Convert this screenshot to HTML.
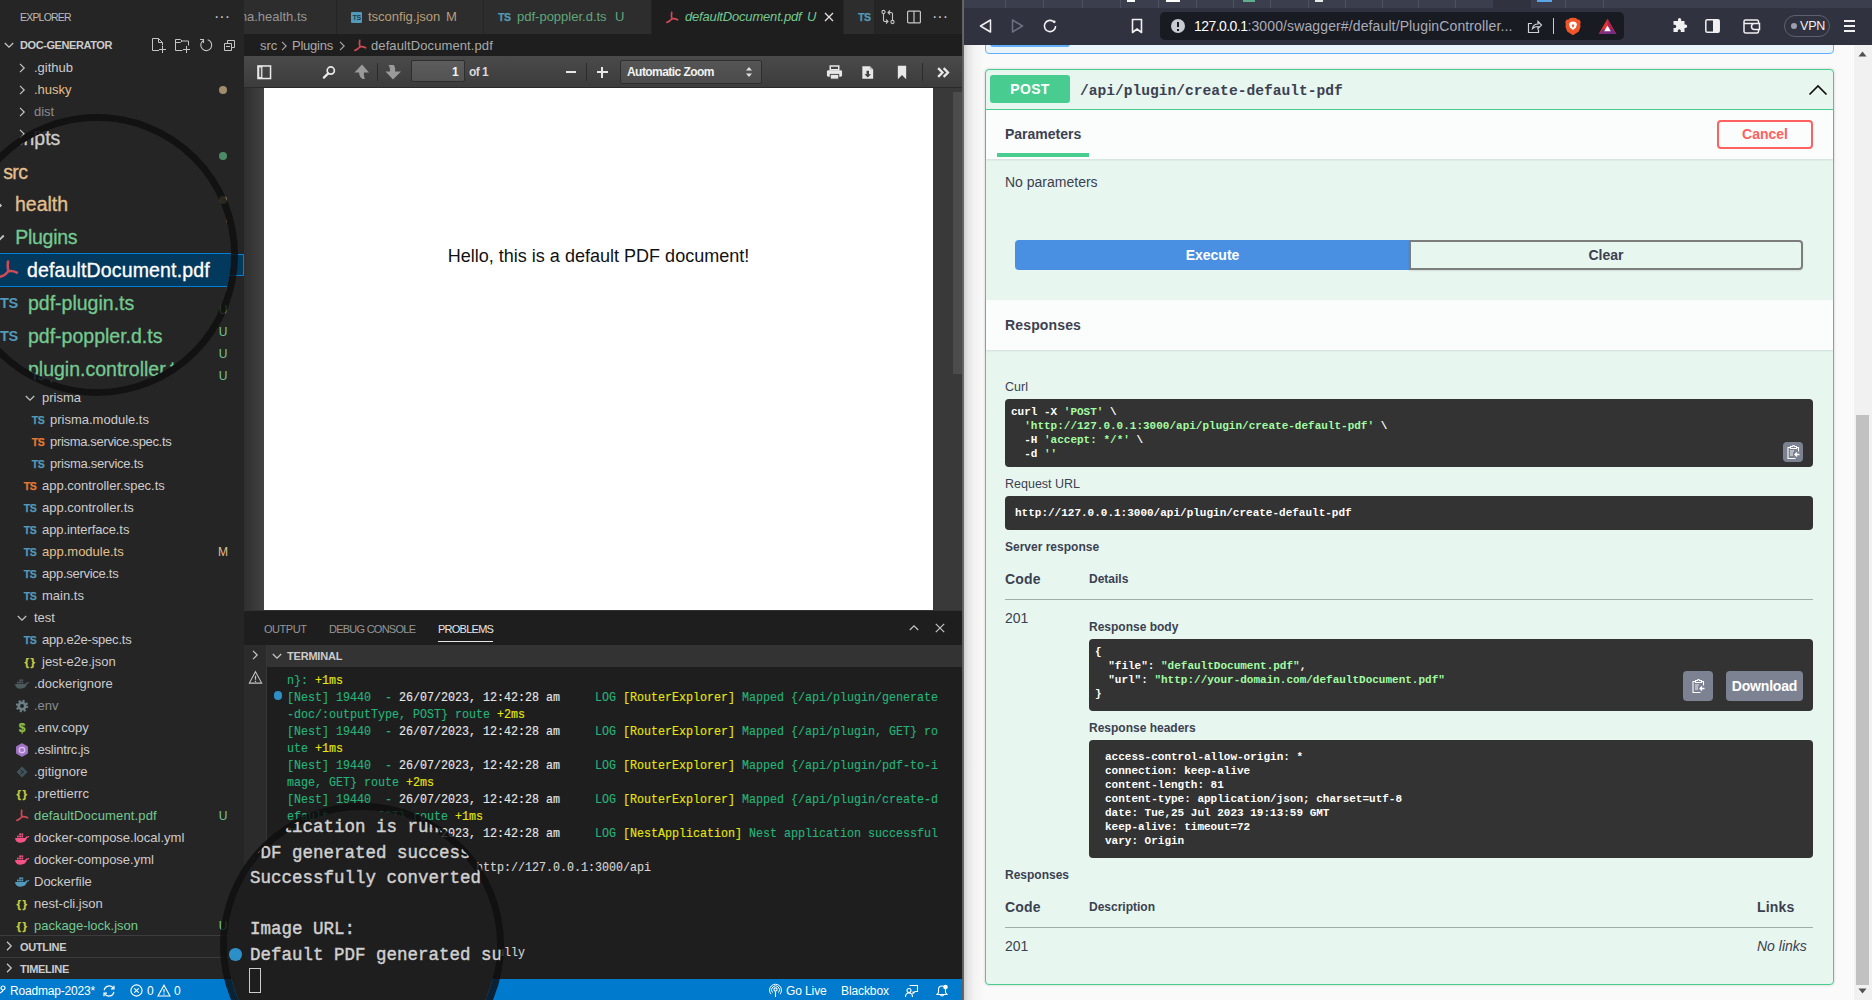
<!DOCTYPE html>
<html lang="en"><head><meta charset="utf-8"><title>doc-generator</title>
<style>
*{box-sizing:border-box}
html,body{margin:0;padding:0}
body{width:1872px;height:1000px;overflow:hidden;position:relative;background:#1e1e1e;font-family:"Liberation Sans",sans-serif;font-size:13px;color:#ccc}
.a{position:absolute}
.t{position:absolute;white-space:pre;line-height:1}
svg{position:absolute;overflow:visible}
/* sidebar */
#sb{left:0;top:0;width:244px;height:980px;background:#252526;overflow:hidden}
.row{position:absolute;left:0;width:244px;height:22px;line-height:22px;font-size:13px;white-space:pre}
.row .lbl{position:absolute;top:0}
.row .st{position:absolute;right:15px;top:0;font-size:12px;text-align:center;width:12px}
.row .ic{position:absolute;top:0;width:16px;text-align:center;font-weight:bold;font-size:10.5px;letter-spacing:-.4px;-webkit-text-stroke:.25px currentColor}
.row .chev{position:absolute;top:6px;width:10px;height:10px}
.cM{color:#e2c08d}.cU{color:#73c991}.cI{color:#8c8c8c}
.dot{position:absolute;width:8px;height:8px;border-radius:50%;right:17px;top:7px}
/* editor */
#tabs{left:244px;top:0;width:718px;height:34px;background:#252526;overflow:hidden}
.tab{position:absolute;top:0;height:34px;background:#2d2d2d;line-height:34.5px;font-size:13px;white-space:pre}
#bc{left:244px;top:34px;width:718px;height:22px;background:#1e1e1e;line-height:23.5px;font-size:13px;color:#a9a9a9}
#pdfbar{left:244px;top:56px;width:718px;height:32px;background:linear-gradient(#4a4a4a,#3c3c3c);border-bottom:1px solid #2a2a2a}
#pdfview{left:244px;top:88px;width:718px;height:522px;background:#404040;overflow:hidden}
/* panel */
#panel{left:244px;top:610px;width:718px;height:370px;background:#1e1e1e;overflow:hidden}
.tl{position:absolute;left:43px;margin-top:1px;white-space:pre;font-family:"Liberation Mono",monospace;font-size:12.8px;transform:scaleX(.9115);transform-origin:0 0;line-height:17px;height:17px;color:#d4d4d4;-webkit-text-stroke:.15px currentColor}
.g{color:#26b37a}.y{color:#e5e510}.w{color:#e5e5e5}
/* status */
#status{left:0;top:979px;width:962px;height:21px;background:#007acc;color:#fff;font-size:12px;line-height:21px;white-space:pre}
/* browser */
#br{left:962px;top:0;width:910px;height:1000px;background:#fafafa;overflow:hidden}
.sw{color:#3b4151}
.mono{font-family:"Liberation Mono",monospace;font-weight:bold;font-size:11px;line-height:14px;white-space:pre;color:#fff}
.mono i{font-style:normal;color:#a2fca2}
.box{position:absolute;background:#333;border-radius:4px}
.h5{position:absolute;font-size:12px;font-weight:bold;color:#3b4151;white-space:pre;line-height:14px}
.b14{position:absolute;font-size:14px;font-weight:bold;color:#3b4151;white-space:pre;line-height:16px}
.n14{position:absolute;font-size:14px;color:#3b4151;white-space:pre;line-height:16px}
/* magnifier */
.mag{position:absolute;border-radius:50%;border:7px solid rgba(14,14,14,.8)}
.magc{position:absolute;left:0;top:0;right:0;bottom:0;border-radius:50%;overflow:hidden}
</style></head>
<body>
<div id="sb" class="a"><div class="t" style="left:20px;top:12px;font-size:10.5px;color:#bbb;letter-spacing:-.8px">EXPLORER</div>
<div class="t" style="left:214px;top:9px;font-size:16px;color:#c5c5c5;letter-spacing:0">···</div>
<svg style="left:4px;top:40px" width="10.0" height="10.0" viewBox="0 0 10 10"><path d="M0.8 3 L5 7.2 L9.2 3" fill="none" stroke="#c5c5c5" stroke-width="1.3"/></svg>
<div class="t" style="left:20px;top:40px;font-size:11px;font-weight:bold;color:#ccc;letter-spacing:-.42px">DOC-GENERATOR</div>
<svg style="left:150px;top:37px" width="16" height="16" viewBox="0 0 16 16" fill="none" stroke="#c5c5c5" stroke-width="1"><path d="M9 13.5H2.5V1.5H8.5L12.5 5.5V8.500000M8.5 1.5V5.5H12.5"/><path d="M12.5 9V16M9 12.5H16" shape-rendering="crispEdges"/></svg>
<svg style="left:174px;top:37px" width="16" height="16" viewBox="0 0 16 16" fill="none" stroke="#c5c5c5" stroke-width="1"><path d="M8.5 13.5H1.5V2.5H6.5L8 4H14.5V8.500000M1.5 5.5H6.5L8 4"/><path d="M12.5 9V16M9 12.5H16" shape-rendering="crispEdges"/></svg>
<svg style="left:198px;top:37px" width="16" height="16" viewBox="0 0 16 16" fill="none" stroke="#c5c5c5" stroke-width="1.1"><path d="M2 2.5H5.5V6M5.100000 3.600000A5.500000 5.500000 0 1 0 9.700000 2.800000"/></svg>
<svg style="left:222px;top:37px" width="16" height="16" viewBox="0 0 16 16" fill="none" stroke="#c5c5c5" stroke-width="1"><path d="M2.5 6.5h7v7h-7zM5.5 6.500000V3.500000h7v7H9.500000" /><path d="M4 9.5H8" shape-rendering="crispEdges"/></svg>
<div class="row" style="top:56.5px"><svg style="left:17px;top:6px" width="10.0" height="10.0" viewBox="0 0 10 10"><path d="M3 0.8 L7.2 5 L3 9.2" fill="none" stroke="#c5c5c5" stroke-width="1.2"/></svg><span class="lbl " style="left:34px">.github</span></div>
<div class="row" style="top:78.5px"><svg style="left:17px;top:6px" width="10.0" height="10.0" viewBox="0 0 10 10"><path d="M3 0.8 L7.2 5 L3 9.2" fill="none" stroke="#c5c5c5" stroke-width="1.2"/></svg><span class="lbl cM" style="left:34px">.husky</span><span class="dot" style="background:#a08d6b"></span></div>
<div class="row" style="top:100.5px"><svg style="left:17px;top:6px" width="10.0" height="10.0" viewBox="0 0 10 10"><path d="M3 0.8 L7.2 5 L3 9.2" fill="none" stroke="#c5c5c5" stroke-width="1.2"/></svg><span class="lbl cI" style="left:34px">dist</span></div>
<div class="row" style="top:122.5px"><svg style="left:17px;top:6px" width="10.0" height="10.0" viewBox="0 0 10 10"><path d="M3 0.8 L7.2 5 L3 9.2" fill="none" stroke="#c5c5c5" stroke-width="1.2"/></svg><span class="lbl cI" style="left:34px">node_modules</span></div>
<div class="row" style="top:144.5px"><svg style="left:17px;top:6px" width="10.0" height="10.0" viewBox="0 0 10 10"><path d="M3 0.8 L7.2 5 L3 9.2" fill="none" stroke="#c5c5c5" stroke-width="1.2"/></svg><span class="lbl cU" style="left:34px">prisma</span><span class="dot" style="background:#4f8a66"></span></div>
<div class="row" style="top:166.5px"><svg style="left:17px;top:6px" width="10.0" height="10.0" viewBox="0 0 10 10"><path d="M3 0.8 L7.2 5 L3 9.2" fill="none" stroke="#c5c5c5" stroke-width="1.2"/></svg><span class="lbl " style="left:34px">scripts</span></div>
<div class="row" style="top:188.5px"><svg style="left:17px;top:6px" width="10.0" height="10.0" viewBox="0 0 10 10"><path d="M0.8 3 L5 7.2 L9.2 3" fill="none" stroke="#c5c5c5" stroke-width="1.2"/></svg><span class="lbl cM" style="left:34px">src</span><span class="dot" style="background:#a08d6b"></span></div>
<div class="row" style="top:210.5px"><svg style="left:25px;top:6px" width="10.0" height="10.0" viewBox="0 0 10 10"><path d="M3 0.8 L7.2 5 L3 9.2" fill="none" stroke="#c5c5c5" stroke-width="1.2"/></svg><span class="lbl cM" style="left:42px">health</span><span class="dot" style="background:#a08d6b"></span></div>
<div class="row" style="top:232.5px"><svg style="left:25px;top:6px" width="10.0" height="10.0" viewBox="0 0 10 10"><path d="M0.8 3 L5 7.2 L9.2 3" fill="none" stroke="#c5c5c5" stroke-width="1.2"/></svg><span class="lbl cU" style="left:42px">Plugins</span><span class="dot" style="background:#4f8a66"></span></div>
<div class="a" style="left:0;top:254px;width:244px;height:22px;background:#04395e;border:1px solid #007fd4"></div>
<div class="row" style="top:254.5px"><svg style="left:31px;top:3px" width="16.0" height="16.0" viewBox="0 0 16 16"><path d="M6.7 2.3C6.3 4.8 6.5 7 6.9 8.8C5.6 10.4 3.6 12 1.9 12.4M6.9 8.8C9 8.5 11 8.9 12.6 9.8" fill="none" stroke="#d04a55" stroke-width="1.7" stroke-linecap="round" stroke-linejoin="round"/></svg><span class="lbl" style="color:#fff;left:50px;letter-spacing:0.15px">defaultDocument.pdf</span><span class="st cU">U</span></div>
<div class="row" style="top:276.5px"><span class="ic" style="left:30px;color:#519aba">TS</span><span class="lbl cU" style="left:50px">pdf-plugin.ts</span><span class="st cU">U</span></div>
<div class="row" style="top:298.5px"><span class="ic" style="left:30px;color:#519aba">TS</span><span class="lbl cU" style="left:50px">pdf-poppler.d.ts</span><span class="st cU">U</span></div>
<div class="row" style="top:320.5px"><span class="ic" style="left:30px;color:#519aba">TS</span><span class="lbl cU" style="left:50px">plugin.controller.ts</span><span class="st cU">U</span></div>
<div class="row" style="top:342.5px"><span class="ic" style="left:30px;color:#519aba">TS</span><span class="lbl cU" style="left:50px">plugin.module.ts</span><span class="st cU">U</span></div>
<div class="row" style="top:364.5px"><span class="ic" style="left:30px;color:#519aba">TS</span><span class="lbl cU" style="left:50px">plugin.service.ts</span><span class="st cU">U</span></div>
<div class="row" style="top:386.5px"><svg style="left:25px;top:6px" width="10.0" height="10.0" viewBox="0 0 10 10"><path d="M0.8 3 L5 7.2 L9.2 3" fill="none" stroke="#c5c5c5" stroke-width="1.2"/></svg><span class="lbl " style="left:42px">prisma</span></div>
<div class="row" style="top:408.5px"><span class="ic" style="left:30px;color:#519aba">TS</span><span class="lbl " style="left:50px">prisma.module.ts</span></div>
<div class="row" style="top:430.5px"><span class="ic" style="left:30px;color:#e37933">TS</span><span class="lbl " style="left:50px;letter-spacing:-0.33px">prisma.service.spec.ts</span></div>
<div class="row" style="top:452.5px"><span class="ic" style="left:30px;color:#519aba">TS</span><span class="lbl " style="left:50px;letter-spacing:-0.25px">prisma.service.ts</span></div>
<div class="row" style="top:474.5px"><span class="ic" style="left:22px;color:#e37933">TS</span><span class="lbl " style="left:42px">app.controller.spec.ts</span></div>
<div class="row" style="top:496.5px"><span class="ic" style="left:22px;color:#519aba">TS</span><span class="lbl " style="left:42px">app.controller.ts</span></div>
<div class="row" style="top:518.5px"><span class="ic" style="left:22px;color:#519aba">TS</span><span class="lbl " style="left:42px;letter-spacing:-0.1px">app.interface.ts</span></div>
<div class="row" style="top:540.5px"><span class="ic" style="left:22px;color:#519aba">TS</span><span class="lbl cM" style="left:42px">app.module.ts</span><span class="st cM">M</span></div>
<div class="row" style="top:562.5px"><span class="ic" style="left:22px;color:#519aba">TS</span><span class="lbl " style="left:42px;letter-spacing:-0.27px">app.service.ts</span></div>
<div class="row" style="top:584.5px"><span class="ic" style="left:22px;color:#519aba">TS</span><span class="lbl " style="left:42px">main.ts</span></div>
<div class="row" style="top:606.5px"><svg style="left:17px;top:6px" width="10.0" height="10.0" viewBox="0 0 10 10"><path d="M0.8 3 L5 7.2 L9.2 3" fill="none" stroke="#c5c5c5" stroke-width="1.2"/></svg><span class="lbl " style="left:34px">test</span></div>
<div class="row" style="top:628.5px"><span class="ic" style="left:22px;color:#519aba">TS</span><span class="lbl " style="left:42px;letter-spacing:-0.2px">app.e2e-spec.ts</span></div>
<div class="row" style="top:650.5px"><span class="ic" style="left:22px;color:#cbcb41;font-size:11.5px;letter-spacing:1.5px;text-indent:1px">{}</span><span class="lbl " style="left:42px">jest-e2e.json</span></div>
<div class="row" style="top:672.5px"><svg style="left:14px;top:3px" width="16.0" height="16.0" viewBox="0 0 16 16"><path d="M1 8h10.200000c.5-1.500000 1.400000-1.700000 2.300000-1.300000.4-.8 1.200000-.9 1.800000-.3-.5.9-1.300000 1.300000-2.300000 1.400000C12.400000 11 10 12.700000 6.500000 12.700000 3.200000 12.700000 1.200000 11 1 8z" fill="#4d5a5e"/><rect x="3" y="5.600000" width="1.800000" height="1.800000" fill="#4d5a5e"/><rect x="5.200000" y="5.600000" width="1.800000" height="1.800000" fill="#4d5a5e"/><rect x="7.400000" y="5.600000" width="1.800000" height="1.800000" fill="#4d5a5e"/><rect x="5.200000" y="3.400000" width="1.800000" height="1.800000" fill="#4d5a5e"/><rect x="7.400000" y="3.400000" width="1.800000" height="1.800000" fill="#4d5a5e"/></svg><span class="lbl " style="left:34px">.dockerignore</span></div>
<div class="row" style="top:694.5px"><svg style="left:14px;top:3px" width="16" height="16" viewBox="0 0 16 16"><circle cx="8" cy="8" r="3.3" fill="none" stroke="#6d8086" stroke-width="2.600000"/><circle cx="8" cy="8" r="5.200000" fill="none" stroke="#6d8086" stroke-width="2" stroke-dasharray="2.040000 2.040000"/></svg><span class="lbl cI" style="left:34px">.env</span></div>
<div class="row" style="top:716.5px"><span class="ic" style="left:14px;color:#8dc149;font-size:12px">$</span><span class="lbl " style="left:34px">.env.copy</span></div>
<div class="row" style="top:738.5px"><svg style="left:14px;top:3px" width="16" height="16" viewBox="0 0 16 16"><path d="M8 1.9l5.200000 3v6.200000L8 14.100000 2.800000 11.100000V4.900000z" fill="#a074c4" stroke="#a074c4" stroke-width="1.400000" stroke-linejoin="round"/><circle cx="8" cy="8" r="2.700000" fill="#a074c4" stroke="#dcc0f2" stroke-width="1.300000"/></svg><span class="lbl " style="left:34px;letter-spacing:-0.18px">.eslintrc.js</span></div>
<div class="row" style="top:760.5px"><svg style="left:14px;top:3px" width="16" height="16" viewBox="0 0 16 16"><path d="M8 2.500000L13.500000 8 8 13.500000 2.500000 8z" fill="#41535b"/><path d="M6.500000 6l3 2-3 2" fill="none" stroke="#252526" stroke-width="1"/></svg><span class="lbl " style="left:34px">.gitignore</span></div>
<div class="row" style="top:782.5px"><span class="ic" style="left:14px;color:#cbcb41;font-size:11.5px;letter-spacing:1.5px;text-indent:1px">{}</span><span class="lbl " style="left:34px">.prettierrc</span></div>
<div class="row" style="top:804.5px"><svg style="left:15px;top:3px" width="16.0" height="16.0" viewBox="0 0 16 16"><path d="M6.7 2.3C6.3 4.8 6.5 7 6.9 8.8C5.6 10.4 3.6 12 1.9 12.4M6.9 8.8C9 8.5 11 8.9 12.6 9.8" fill="none" stroke="#d04a55" stroke-width="1.7" stroke-linecap="round" stroke-linejoin="round"/></svg><span class="lbl cU" style="left:34px;letter-spacing:0.15px">defaultDocument.pdf</span><span class="st cU">U</span></div>
<div class="row" style="top:826.5px"><svg style="left:14px;top:3px" width="16.0" height="16.0" viewBox="0 0 16 16"><path d="M1 8h10.200000c.5-1.500000 1.400000-1.700000 2.300000-1.300000.4-.8 1.200000-.9 1.800000-.3-.5.9-1.300000 1.300000-2.300000 1.400000C12.400000 11 10 12.700000 6.500000 12.700000 3.200000 12.700000 1.200000 11 1 8z" fill="#f55385"/><rect x="3" y="5.600000" width="1.800000" height="1.800000" fill="#f55385"/><rect x="5.200000" y="5.600000" width="1.800000" height="1.800000" fill="#f55385"/><rect x="7.400000" y="5.600000" width="1.800000" height="1.800000" fill="#f55385"/><rect x="5.200000" y="3.400000" width="1.800000" height="1.800000" fill="#f55385"/><rect x="7.400000" y="3.400000" width="1.800000" height="1.800000" fill="#f55385"/></svg><span class="lbl " style="left:34px">docker-compose.local.yml</span></div>
<div class="row" style="top:848.5px"><svg style="left:14px;top:3px" width="16.0" height="16.0" viewBox="0 0 16 16"><path d="M1 8h10.200000c.5-1.500000 1.400000-1.700000 2.300000-1.300000.4-.8 1.200000-.9 1.800000-.3-.5.9-1.300000 1.300000-2.300000 1.400000C12.400000 11 10 12.700000 6.500000 12.700000 3.200000 12.700000 1.200000 11 1 8z" fill="#f55385"/><rect x="3" y="5.600000" width="1.800000" height="1.800000" fill="#f55385"/><rect x="5.200000" y="5.600000" width="1.800000" height="1.800000" fill="#f55385"/><rect x="7.400000" y="5.600000" width="1.800000" height="1.800000" fill="#f55385"/><rect x="5.200000" y="3.400000" width="1.800000" height="1.800000" fill="#f55385"/><rect x="7.400000" y="3.400000" width="1.800000" height="1.800000" fill="#f55385"/></svg><span class="lbl " style="left:34px">docker-compose.yml</span></div>
<div class="row" style="top:870.5px"><svg style="left:14px;top:3px" width="16.0" height="16.0" viewBox="0 0 16 16"><path d="M1 8h10.200000c.5-1.500000 1.400000-1.700000 2.300000-1.300000.4-.8 1.200000-.9 1.800000-.3-.5.9-1.300000 1.300000-2.300000 1.400000C12.400000 11 10 12.700000 6.500000 12.700000 3.200000 12.700000 1.200000 11 1 8z" fill="#519aba"/><rect x="3" y="5.600000" width="1.800000" height="1.800000" fill="#519aba"/><rect x="5.200000" y="5.600000" width="1.800000" height="1.800000" fill="#519aba"/><rect x="7.400000" y="5.600000" width="1.800000" height="1.800000" fill="#519aba"/><rect x="5.200000" y="3.400000" width="1.800000" height="1.800000" fill="#519aba"/><rect x="7.400000" y="3.400000" width="1.800000" height="1.800000" fill="#519aba"/></svg><span class="lbl " style="left:34px">Dockerfile</span></div>
<div class="row" style="top:892.5px"><span class="ic" style="left:14px;color:#cbcb41;font-size:11.5px;letter-spacing:1.5px;text-indent:1px">{}</span><span class="lbl " style="left:34px">nest-cli.json</span></div>
<div class="row" style="top:914.5px"><span class="ic" style="left:14px;color:#cbcb41;font-size:11.5px;letter-spacing:1.5px;text-indent:1px">{}</span><span class="lbl cU" style="left:34px">package-lock.json</span><span class="st cU">U</span></div>
<div class="a" style="left:0;top:935px;width:244px;height:1px;background:#3c3c3c"></div>
<svg style="left:4px;top:941px" width="10.0" height="10.0" viewBox="0 0 10 10"><path d="M3 0.8 L7.2 5 L3 9.2" fill="none" stroke="#c5c5c5" stroke-width="1.3"/></svg>
<div class="t" style="left:20px;top:942px;font-size:11px;font-weight:bold;color:#ccc;letter-spacing:-.3px">OUTLINE</div>
<div class="a" style="left:0;top:957px;width:244px;height:1px;background:#3c3c3c"></div>
<svg style="left:4px;top:963px" width="10.0" height="10.0" viewBox="0 0 10 10"><path d="M3 0.8 L7.2 5 L3 9.2" fill="none" stroke="#c5c5c5" stroke-width="1.3"/></svg>
<div class="t" style="left:20px;top:964px;font-size:11px;font-weight:bold;color:#ccc;letter-spacing:-.3px">TIMELINE</div></div>
<div id="tabs" class="a">
  <!-- tab0 (cut) -->
  <div class="tab" style="left:0;width:92px"><span class="a" style="top:0;right:29px;color:#969696">prisma.health.ts</span></div>
  <!-- tab1 tsconfig -->
  <div class="tab" style="left:93px;width:146px">
    <div class="a" style="left:14px;top:12px;width:11px;height:11px;background:#519aba;border-radius:1px"></div>
    <span class="a" style="top:0;left:15.5px;top:14px;font-size:7px;line-height:8px;font-weight:bold;color:#1d3a4a;letter-spacing:-.3px">TS</span>
    <span class="a" style="top:0;left:31px;color:#b89f78">tsconfig.json</span><span class="a" style="top:0;left:109px;color:#b89f78">M</span>
  </div>
  <!-- tab2 pdf-poppler -->
  <div class="tab" style="left:240px;width:167px">
    <span class="a" style="top:0;left:14px;font-size:10.5px;font-weight:bold;color:#519aba;letter-spacing:-.4px;-webkit-text-stroke:.25px #519aba">TS</span>
    <span class="a" style="top:0;left:33px;color:#5fa77b">pdf-poppler.d.ts</span><span class="a" style="top:0;left:131px;color:#5fa77b">U</span>
  </div>
  <!-- tab3 active -->
  <div class="tab" style="left:408px;width:191px;background:#1e1e1e">
    <svg style="left:13.0px;top:9.5px" width="16.0" height="16.0" viewBox="0 0 16 16"><path d="M6.7 2.3C6.3 4.8 6.5 7 6.9 8.8C5.6 10.4 3.6 12 1.9 12.4M6.9 8.8C9 8.5 11 8.9 12.6 9.8" fill="none" stroke="#d04a55" stroke-width="1.7" stroke-linecap="round" stroke-linejoin="round"/></svg>
    <span class="a" style="top:0;left:33px;color:#73c991;font-style:italic;letter-spacing:-.18px">defaultDocument.pdf</span><span class="a" style="top:0;left:155px;color:#73c991;font-style:italic">U</span>
    <svg style="left:172px;top:12px" width="10" height="10" viewBox="0 0 10 10"><path d="M1 1L9 9M9 1L1 9" stroke="#e0e0e0" stroke-width="1.3"/></svg>
  </div>
  <!-- tab4 cut -->
  <div class="tab" style="left:600px;width:30px"><span class="a" style="top:0;left:14px;font-size:10.5px;font-weight:bold;color:#519aba;letter-spacing:-.4px;-webkit-text-stroke:.25px #519aba">TS</span></div>
  <!-- actions -->
  <div class="a" style="left:630px;top:0;width:88px;height:34px;background:#252526"></div>
  <svg style="left:636px;top:9px" width="16" height="16" viewBox="0 0 16 16" fill="none" stroke="#c5c5c5" stroke-width="1.1"><circle cx="3.5" cy="3" r="1.6"/><circle cx="12.5" cy="13" r="1.6"/><path d="M3.5 4.600000v6.400000a1.500000 1.500000 0 0 0 1.500000 1.500000h2.500000M6 10.500000l2 2-2 2M12.500000 11.400000V5a1.500000 1.500000 0 0 0-1.500000-1.500000H8.500000M10 1.500000l-2 2 2 2"/></svg>
  <svg style="left:662px;top:9px" width="16" height="16" viewBox="0 0 16 16" fill="none" stroke="#c5c5c5" stroke-width="1.2"><rect x="1.6" y="2.1" width="12.8" height="11.8" rx="1"/><path d="M8 2v12"/></svg>
  <div class="t" style="left:688px;top:9px;font-size:16px;color:#c5c5c5;letter-spacing:0">···</div>
</div>
<div id="bc" class="a">
  <span class="a" style="top:0;left:16px">src</span>
  <svg style="left:34.5px;top:7.0px" width="10.0" height="10.0" viewBox="0 0 10 10"><path d="M3 0.8 L7.2 5 L3 9.2" fill="none" stroke="#a9a9a9" stroke-width="1.1"/></svg>
  <span class="a" style="top:0;left:48px;letter-spacing:-.25px">Plugins</span>
  <svg style="left:93.0px;top:7.0px" width="10.0" height="10.0" viewBox="0 0 10 10"><path d="M3 0.8 L7.2 5 L3 9.2" fill="none" stroke="#a9a9a9" stroke-width="1.1"/></svg>
  <svg style="left:109.0px;top:3.5px" width="16.0" height="16.0" viewBox="0 0 16 16"><path d="M6.7 2.3C6.3 4.8 6.5 7 6.9 8.8C5.6 10.4 3.6 12 1.9 12.4M6.9 8.8C9 8.5 11 8.9 12.6 9.8" fill="none" stroke="#d04a55" stroke-width="1.7" stroke-linecap="round" stroke-linejoin="round"/></svg>
  <span class="a" style="top:0;left:127px;letter-spacing:.1px">defaultDocument.pdf</span>
</div>
<div id="pdfbar" class="a">
  <!-- sidebar toggle -->
  <svg style="left:13px;top:8.5px" width="14.5" height="14.5" viewBox="0 0 15 15"><rect x="1" y="1" width="13" height="13" fill="none" stroke="#e8e8e8" stroke-width="1.6"/><rect x="1" y="1" width="4.6" height="13" fill="#e8e8e8"/><rect x="2.3" y="2.6" width="2" height="9.8" fill="#555"/></svg>
  <!-- search -->
  <svg style="left:77.5px;top:8.5px" width="14.5" height="14.5" viewBox="0 0 17 17" fill="none" stroke="#e8e8e8"><circle cx="10.3" cy="6.5" r="4.2" stroke-width="2"/><path d="M7.2 9.8L2.2 14.8" stroke-width="2.6" stroke-linecap="round"/></svg>
  <!-- up -->
  <svg style="left:109px;top:7px" width="18" height="18" viewBox="0 0 18 18"><path d="M9 1.500000L1.500000 9.500000h4.500000c.2 2.500000 1.200000 5 3.600000 6.500000h2.400000c-1-2-1.300000-4.200000-1-6.500000h5z" fill="#9a9a9a"/></svg>
  <div class="a" style="left:133px;top:7px;width:1px;height:18px;background:#2c2c2c"></div>
  <!-- down -->
  <svg style="left:140px;top:7px" width="18" height="18" viewBox="0 0 18 18"><path d="M9 16.500000L1.500000 8.500000h4.500000c.2-2.500000 -.3-5 -1.600000-6.500000h5.400000c1.400000 2 1.700000 4.200000 1.200000 6.500000h6z" fill="#9a9a9a"/></svg>
  <!-- page input -->
  <div class="a" style="left:167px;top:4px;width:54px;height:22px;background:linear-gradient(#5c5c5c,#525252);border:1px solid #2e2e2e;border-radius:2px"></div>
  <div class="t" style="left:208px;top:9.5px;font-size:12px;font-weight:bold;color:#f2f2f2">1</div>
  <div class="t" style="left:225px;top:9.5px;font-size:12px;font-weight:bold;color:#d9d9d9;letter-spacing:-.55px">of 1</div>
  <!-- minus/plus -->
  <div class="a" style="left:322px;top:15px;width:10px;height:2px;background:#e8e8e8"></div>
  <div class="a" style="left:342px;top:7px;width:1px;height:18px;background:#2c2c2c"></div>
  <div class="a" style="left:352.5px;top:15px;width:11px;height:2px;background:#e8e8e8"></div>
  <div class="a" style="left:357px;top:10.5px;width:2px;height:11px;background:#e8e8e8"></div>
  <!-- select -->
  <div class="a" style="left:376px;top:4px;width:142px;height:24px;background:linear-gradient(#555,#4b4b4b);border:1px solid #2e2e2e;border-radius:2px"></div>
  <div class="t" style="left:383px;top:9.5px;font-size:12px;font-weight:bold;color:#f2f2f2;letter-spacing:-.55px">Automatic Zoom</div>
  <svg style="left:501px;top:10px" width="8" height="12" viewBox="0 0 8 12"><path d="M4 1L7 4.600000H1zM4 11L7 7.400000H1z" fill="#e0e0e0"/></svg>
  <!-- print -->
  <svg style="left:581.5px;top:8px" width="17" height="17" viewBox="0 0 18 18"><path d="M4.500000 2h9v4h-9z" fill="none" stroke="#e8e8e8" stroke-width="1.6"/><rect x="1" y="6.500000" width="16" height="7" rx="1.5" fill="#e8e8e8"/><rect x="4.500000" y="11" width="9" height="5" fill="#e8e8e8" stroke="#444" stroke-width="1"/></svg>
  <!-- download -->
  <svg style="left:617px;top:8.5px" width="13.5" height="15" viewBox="0 0 16 18"><path d="M1.500000 1.500000h9l4 4v11h-13z" fill="#e8e8e8"/><path d="M10.500000 1.500000v4h4" fill="#bbb"/><path d="M6.500000 7h3v4h2.500000L8 15 4 11h2.500000z" fill="#444"/></svg>
  <!-- bookmark -->
  <svg style="left:653px;top:8.5px" width="10" height="15" viewBox="0 0 12 18"><path d="M1 1h10v16l-5-5-5 5z" fill="#e8e8e8"/></svg>
  <div class="a" style="left:678px;top:7px;width:1px;height:18px;background:#2c2c2c"></div>
  <!-- >> -->
  <svg style="left:691.5px;top:10.5px" width="14.5" height="11" viewBox="0 0 16 14" fill="none" stroke="#e8e8e8" stroke-width="3"><path d="M1.500000 1.500000L7 7 1.500000 12.500000M8.500000 1.500000L14 7 8.500000 12.500000"/></svg>
</div>
<div id="pdfview" class="a">
  <div class="a" style="left:0;top:0;width:20px;height:522px;background:linear-gradient(to right,#2f2f2f,#424242)"></div>
  <div class="a" style="left:20px;top:0;width:669px;height:530px;background:#fff"></div>
  <div class="t" style="left:20px;width:669px;text-align:center;top:159px;font-size:18.05px;color:#111">Hello, this is a default PDF document!</div>
  <div class="a" style="left:689px;top:0;width:29px;height:522px;background:#393939"></div>
  <div class="a" style="left:708.5px;top:4px;width:9.5px;height:282px;background:#4c4c4c"></div>
</div>

<div id="panel" class="a">
<div class="a" style="left:0;top:0;width:718px;height:1px;background:#333"></div>
<div class="t" style="left:20px;top:14px;font-size:11px;color:#969696;letter-spacing:-.45px">OUTPUT</div>
<div class="t" style="left:85px;top:14px;font-size:11px;color:#969696;letter-spacing:-.75px">DEBUG CONSOLE</div>
<div class="t" style="left:194px;top:14px;font-size:11px;color:#e7e7e7;letter-spacing:-.75px">PROBLEMS</div>
<div class="a" style="left:194px;top:31px;width:55px;height:1px;background:#e7e7e7"></div>
<svg style="left:665.0px;top:12.5px" width="10.0" height="10.0" viewBox="0 0 10 10"><path d="M0.8 7 L5 2.8 L9.2 7" fill="none" stroke="#c5c5c5" stroke-width="1.2"/></svg>
<svg style="left:691px;top:13px" width="10" height="10" viewBox="0 0 10 10"><path d="M0.8 0.8L9.2 9.2M9.2 0.8L0.8 9.2" stroke="#c5c5c5" stroke-width="1.2"/></svg>
<div class="a" style="left:0;top:35px;width:22.5px;height:335px;background:#2b2b2b;border-right:1px solid #363636"></div>
<svg style="left:5.5px;top:40.0px" width="10.0" height="10.0" viewBox="0 0 10 10"><path d="M3 0.8 L7.2 5 L3 9.2" fill="none" stroke="#c5c5c5" stroke-width="1.2"/></svg>
<svg style="left:3.5px;top:59.5px" width="15" height="15" viewBox="0 0 16 16" fill="none" stroke="#c5c5c5" stroke-width="1.1"><path d="M8 1.800000L14.600000 14H1.400000z"/><path d="M8 6v4.500000M8 11.500000v1.300000" stroke-width="1.3"/></svg>
<div class="a" style="left:23px;top:35px;width:695px;height:22px;background:#333"></div>
<svg style="left:28.0px;top:41.0px" width="10.0" height="10.0" viewBox="0 0 10 10"><path d="M0.8 3 L5 7.2 L9.2 3" fill="none" stroke="#c5c5c5" stroke-width="1.3"/></svg>
<div class="t" style="left:43px;top:40.5px;font-size:11px;font-weight:bold;color:#ccc;letter-spacing:-.2px">TERMINAL</div>
<div class="tl" style="top:60.5px"><span class="g">n}:</span> <span class="y">+1ms</span></div>
<div class="tl" style="top:77.5px"><span class="g">[Nest] 19440  - </span><span class="w">26/07/2023, 12:42:28 am</span>     <span class="g">LOG</span> <span class="y">[RouterExplorer]</span> <span class="g">Mapped {/api/plugin/generate</span></div>
<div class="tl" style="top:94.5px"><span class="g">-doc/:outputType, POST} route</span> <span class="y">+2ms</span></div>
<div class="tl" style="top:111.5px"><span class="g">[Nest] 19440  - </span><span class="w">26/07/2023, 12:42:28 am</span>     <span class="g">LOG</span> <span class="y">[RouterExplorer]</span> <span class="g">Mapped {/api/plugin, GET} ro</span></div>
<div class="tl" style="top:128.5px"><span class="g">ute</span> <span class="y">+1ms</span></div>
<div class="tl" style="top:145.5px"><span class="g">[Nest] 19440  - </span><span class="w">26/07/2023, 12:42:28 am</span>     <span class="g">LOG</span> <span class="y">[RouterExplorer]</span> <span class="g">Mapped {/api/plugin/pdf-to-i</span></div>
<div class="tl" style="top:162.5px"><span class="g">mage, GET} route</span> <span class="y">+2ms</span></div>
<div class="tl" style="top:179.5px"><span class="g">[Nest] 19440  - </span><span class="w">26/07/2023, 12:42:28 am</span>     <span class="g">LOG</span> <span class="y">[RouterExplorer]</span> <span class="g">Mapped {/api/plugin/create-d</span></div>
<div class="tl" style="top:196.5px"><span class="g">efault-pdf, POST} route</span> <span class="y">+1ms</span></div>
<div class="tl" style="top:213.5px"><span class="g">[Nest] 19440  - </span><span class="w">26/07/2023, 12:42:28 am</span>     <span class="g">LOG</span> <span class="y">[NestApplication]</span> <span class="g">Nest application successful</span></div>
<div class="tl" style="top:230.5px"><span class="g">ly started</span> <span class="y">+3ms</span></div>
<div class="tl" style="top:247.5px">Application is running on: http://127.0.0.1:3000/api</div>
<div class="tl" style="top:264.5px">PDF generated successfully</div>
<div class="tl" style="top:281.5px">Successfully converted</div>
<div class="tl" style="top:315.5px">Image URL:</div>
<div class="tl" style="top:332.5px">Default PDF generated successfully</div>
<div class="a" style="left:29.5px;top:81px;width:8.5px;height:8.5px;border-radius:50%;background:#2d8fc7"></div>
<div class="a" style="left:29.5px;top:336px;width:8.5px;height:8.5px;border-radius:50%;background:#2d8fc7"></div>
</div>
<div id="status" class="a">
  <svg style="left:-5px;top:6px" width="12" height="12" viewBox="0 0 12 12" fill="none" stroke="#fff" stroke-width="1.2"><circle cx="8" cy="3" r="2"/><path d="M8 5c0 3-5 2-5 6"/></svg>
  <span class="a" style="top:1.5px;left:10px;letter-spacing:-.18px">Roadmap-2023*</span>
  <svg style="left:102px;top:5px" width="14" height="14" viewBox="0 0 14 14" fill="none" stroke="#fff" stroke-width="1.3"><path d="M2.2 6.2A5 5 0 0 1 11.500000 4.500000M11.800000 7.800000A5 5 0 0 1 2.500000 9.500000"/><path d="M9 4.800000h3V1.800000M5 9.200000H2v3" stroke-width="1.2"/></svg>
  <svg style="left:130px;top:5px" width="13" height="13" viewBox="0 0 13 13" fill="none" stroke="#fff" stroke-width="1.1"><circle cx="6.5" cy="6.5" r="5.6"/><path d="M4.300000 4.300000l4.400000 4.400000M8.700000 4.300000L4.300000 8.700000"/></svg>
  <span class="a" style="top:1.5px;left:147px">0</span>
  <svg style="left:157px;top:5px" width="14" height="13" viewBox="0 0 14 13" fill="none" stroke="#fff" stroke-width="1.1"><path d="M7 1.200000L13 12H1z"/><path d="M7 5v3.500000M7 9.500000v1.200000"/></svg>
  <span class="a" style="top:1.5px;left:174px">0</span>
  <svg style="left:769px;top:5px" width="13" height="14" viewBox="0 0 13 14" fill="none" stroke="#fff" stroke-width="1.1"><circle cx="6.5" cy="5.500000" r="1.6"/><path d="M6.500000 7.500000v5.500000"/><path d="M3.600000 8.600000a4 4 0 1 1 5.800000 0M2 10.200000a6 6 0 1 1 9 0" stroke-width="1"/></svg>
  <span class="a" style="top:1.5px;left:786px;letter-spacing:-.1px">Go Live</span>
  <span class="a" style="top:1.5px;left:841px;letter-spacing:-.1px">Blackbox</span>
  <svg style="left:904px;top:5px" width="15" height="14" viewBox="0 0 15 14" fill="none" stroke="#fff" stroke-width="1.1"><path d="M5.500000 1.500000h8v6h-2.500000l-2 2v-2"/><circle cx="5" cy="6.500000" r="2"/><path d="M1.500000 13c0-2.500000 1.500000-4 3.500000-4s3.500000 1.500000 3.500000 4"/></svg>
  <svg style="left:935px;top:5px" width="14" height="14" viewBox="0 0 14 14" fill="none" stroke="#fff" stroke-width="1.1"><path d="M2 10.500000h10l-1.500000-2V5.500000a3.500000 3.500000 0 0 0-7 0v3zM5.500000 10.500000a1.500000 1.500000 0 0 0 3 0"/><circle cx="10.500000" cy="3" r="2.300000" fill="#fff" stroke="none"/></svg>
</div>

<div id="br" class="a"><div class="a" style="left:-962px;top:0;width:1872px;height:1000px">
  <!-- page content (abs page coords) -->
  <!-- previous (GET) opblock bottom -->
  <div class="a" style="left:985px;top:20px;width:849px;height:34px;border:1px solid #61affe;border-radius:4px;background:#ebf3fb"></div>
  <div class="a" style="left:990px;top:30px;width:80px;height:17px;background:#61affe;border-radius:3px"></div>
  <!-- POST opblock -->
  <div class="a" style="left:985px;top:69px;width:849px;height:916px;border:1px solid #49cc90;border-radius:4px;background:#e8f6f0;box-shadow:0 0 3px rgba(0,0,0,.19)"></div>
  <div class="a" style="left:986px;top:109px;width:847px;height:1px;background:#49cc90"></div>
  <div class="a" style="left:990px;top:75px;width:80px;height:28px;background:#49cc90;border-radius:3px;color:#fff;font-weight:bold;font-size:14px;line-height:28px;text-align:center;letter-spacing:.3px">POST</div>
  <div class="t" style="left:1080px;top:83.5px;font-family:'Liberation Mono',monospace;font-weight:bold;font-size:14.6px;color:#3b4151">/api/plugin/create-default-pdf</div>
  <svg style="left:1808px;top:84px" width="20" height="12" viewBox="0 0 20 12"><path d="M1.500000 10.500000L10 2l8.500000 8.500000" fill="none" stroke="#111" stroke-width="1.7"/></svg>
  <!-- Parameters header -->
  <div class="a" style="left:986px;top:110px;width:847px;height:49px;background:#fbfdfc;box-shadow:0 1px 2px rgba(0,0,0,.1)"></div>
  <div class="b14" style="left:1005px;top:126px">Parameters</div>
  <div class="a" style="left:997px;top:153px;width:92px;height:4px;background:#49cc90"></div>
  <div class="a" style="left:1717px;top:120px;width:96px;height:29px;border:2px solid #ff6060;border-radius:4px;color:#ff6060;font-weight:bold;font-size:14px;line-height:25px;text-align:center;background:#fbfdfc">Cancel</div>
  <div class="n14" style="left:1005px;top:174px">No parameters</div>
  <!-- execute / clear -->
  <div class="a" style="left:1015px;top:240px;width:395px;height:30px;background:#4990e2;border-radius:4px 0 0 4px;color:#fff;font-weight:bold;font-size:14px;line-height:30px;text-align:center">Execute</div>
  <div class="a" style="left:1409px;top:240px;width:394px;height:30px;border:2px solid #7d7d7d;border-radius:0 4px 4px 0;color:#3b4151;font-weight:bold;font-size:14px;line-height:26px;text-align:center;box-shadow:0 1px 2px rgba(0,0,0,.1)">Clear</div>
  <!-- Responses header -->
  <div class="a" style="left:986px;top:300px;width:847px;height:50px;background:#fbfdfc;box-shadow:0 1px 2px rgba(0,0,0,.1)"></div>
  <div class="b14" style="left:1005px;top:317px;letter-spacing:.15px">Responses</div>
  <!-- curl -->
  <div class="h5" style="left:1005px;top:380px;font-weight:normal;font-size:12.5px">Curl</div>
  <div class="box" style="left:1005px;top:399px;width:808px;height:68px"></div>
  <div class="a mono" style="left:1011px;top:405px">curl -X <i>'POST'</i> \
  <i>'http://127.0.0.1:3000/api/plugin/create-default-pdf'</i> \
  -H <i>'accept: */*'</i> \
  -d <i>''</i></div>
  <div class="a" style="left:1783px;top:442px;width:20px;height:20px;background:#7d8293;border-radius:4px"></div>
  <svg style="left:1786px;top:444px" width="15" height="16" viewBox="0 0 15 16" fill="none" stroke="#fff" stroke-width="1.1"><path d="M9.500000 14.500000h-7.500000v-11h2.500000M10 3.500000h2.500000v4M4.500000 4.500000v-2h2l.5-1h1l.5 1h2v2z"/><path d="M4 7h4M4 9h3M4 11h3" stroke-width=".9"/><path d="M13.500000 10.500000h-4M11 8.500000l-2 2 2 2" stroke-width="1.3"/></svg>
  <!-- request url -->
  <div class="h5" style="left:1005px;top:477px;font-weight:normal;font-size:12.5px">Request URL</div>
  <div class="box" style="left:1005px;top:496px;width:808px;height:34px"></div>
  <div class="a mono" style="left:1015px;top:506px">http://127.0.0.1:3000/api/plugin/create-default-pdf</div>
  <div class="h5" style="left:1005px;top:540px">Server response</div>
  <div class="b14" style="left:1005px;top:571px;letter-spacing:.2px">Code</div>
  <div class="h5" style="left:1089px;top:572px">Details</div>
  <div class="a" style="left:1005px;top:599px;width:808px;height:1px;background:#9fb0ac"></div>
  <div class="n14" style="left:1005px;top:610px">201</div>
  <div class="h5" style="left:1089px;top:620px">Response body</div>
  <div class="box" style="left:1089px;top:639px;width:724px;height:72px"></div>
  <div class="a mono" style="left:1095px;top:645px">{
  "file": <i>"defaultDocument.pdf"</i>,
  "url": <i>"http://your-domain.com/defaultDocument.pdf"</i>
}</div>
  <div class="a" style="left:1683px;top:671px;width:30px;height:30px;background:#7d8293;border-radius:4px"></div>
  <svg style="left:1690.500000px;top:678px" width="15" height="16" viewBox="0 0 15 16" fill="none" stroke="#fff" stroke-width="1.1"><path d="M9.500000 14.500000h-7.500000v-11h2.500000M10 3.500000h2.500000v4M4.500000 4.500000v-2h2l.5-1h1l.5 1h2v2z"/><path d="M4 7h4M4 9h3M4 11h3" stroke-width=".9"/><path d="M13.500000 10.500000h-4M11 8.500000l-2 2 2 2" stroke-width="1.3"/></svg>
  <div class="a" style="left:1726px;top:671px;width:77px;height:30px;background:#7d8293;border-radius:4px;color:#fff;font-weight:bold;font-size:14px;line-height:30px;text-align:center;letter-spacing:-.2px">Download</div>
  <div class="h5" style="left:1089px;top:721px">Response headers</div>
  <div class="box" style="left:1089px;top:740px;width:724px;height:118px"></div>
  <div class="a mono" style="left:1105px;top:750px">access-control-allow-origin: * 
connection: keep-alive 
content-length: 81 
content-type: application/json; charset=utf-8 
date: Tue,25 Jul 2023 19:13:59 GMT 
keep-alive: timeout=72 
vary: Origin </div>
  <div class="h5" style="left:1005px;top:868px">Responses</div>
  <div class="b14" style="left:1005px;top:899px;letter-spacing:.2px">Code</div>
  <div class="h5" style="left:1089px;top:900px">Description</div>
  <div class="b14" style="left:1757px;top:899px;letter-spacing:.2px">Links</div>
  <div class="a" style="left:1005px;top:927px;width:808px;height:1px;background:#9fb0ac"></div>
  <div class="n14" style="left:1005px;top:938px">201</div>
  <div class="n14" style="left:1757px;top:938px;font-style:italic">No links</div>
  <!-- scrollbar -->
  <div class="a" style="left:1854px;top:45px;width:18px;height:955px;background:#f1f1f1"></div>
  <div class="a" style="left:1856px;top:415px;width:13px;height:570px;background:#c1c1c1"></div>
  <svg style="left:1858px;top:51px" width="9" height="6" viewBox="0 0 9 6"><path d="M4.500000 0.500000L8.500000 5.500000H0.500000z" fill="#505050"/></svg>
  <svg style="left:1858px;top:988px" width="9" height="6" viewBox="0 0 9 6"><path d="M4.500000 5.500000L8.500000 0.500000H0.500000z" fill="#505050"/></svg>
  <!-- left edge shadow -->
  <div class="a" style="left:962px;top:0;width:22px;height:1000px;background:linear-gradient(to right,#5a5a5a 0,#6e6e6e 2px,#d2d2d2 2.5px,#e4e4e4 6px,#f2f2f2 12px,rgba(250,250,250,0) 22px)"></div>
  <!-- ===== browser chrome ===== -->
  <div class="a" style="left:964px;top:0;width:908px;height:9px;background:#3b3e4c"></div>
  <div class="a" style="left:964px;top:8px;width:908px;height:37px;background:#30333f"></div>
  <!-- tab strip remnants -->
  <div class="a" style="left:1005px;top:0;width:1px;height:8px;background:#4d5060"></div>
  <div class="a" style="left:1043px;top:0;width:1px;height:8px;background:#4d5060"></div>
  <div class="a" style="left:1082px;top:0;width:1px;height:8px;background:#4d5060"></div>
  <div class="a" style="left:1120px;top:0;width:1px;height:8px;background:#4d5060"></div>
  <div class="a" style="left:1158px;top:0;width:1px;height:8px;background:#4d5060"></div>
  <div class="a" style="left:1196px;top:0;width:1px;height:8px;background:#4d5060"></div>
  <div class="a" style="left:1233px;top:0;width:1px;height:8px;background:#4d5060"></div>
  <div class="a" style="left:1270px;top:0;width:1px;height:8px;background:#4d5060"></div>
  <div class="a" style="left:1308px;top:0;width:1px;height:8px;background:#4d5060"></div>
  <div class="a" style="left:1345px;top:0;width:1px;height:8px;background:#4d5060"></div>
  <div class="a" style="left:1382px;top:0;width:1px;height:8px;background:#4d5060"></div>
  <div class="a" style="left:1418px;top:0;width:1px;height:8px;background:#4d5060"></div>
  <div class="a" style="left:1455px;top:0;width:1px;height:8px;background:#4d5060"></div>
  <div class="a" style="left:1493px;top:0;width:38px;height:8px;background:#30333f"></div>
  <div class="a" style="left:1537px;top:0;width:15px;height:2px;background:#5aa5e8"></div>
  <div class="a" style="left:1565px;top:0;width:1px;height:8px;background:#4d5060"></div>
  <div class="a" style="left:1603px;top:0;width:1px;height:8px;background:#4d5060"></div>
  <div class="a" style="left:1127px;top:0;width:8px;height:2px;background:#fff"></div>
  <div class="a" style="left:1166px;top:0;width:14px;height:2px;background:#fff"></div>
  <div class="a" style="left:1315px;top:0;width:8px;height:2px;background:#e8e8e8"></div>
  <div class="a" style="left:1243px;top:0;width:12px;height:2px;background:#5fae8c"></div>
  <!-- nav icons -->
  <svg style="left:978px;top:18px" width="15" height="16" viewBox="0 0 15 16"><path d="M12.500000 2L2.500000 8l10 6z" fill="none" stroke="#f0f0f0" stroke-width="1.5" stroke-linejoin="round"/></svg>
  <svg style="left:1010px;top:18px" width="15" height="16" viewBox="0 0 15 16"><path d="M2.500000 2L12.500000 8l-10 6z" fill="none" stroke="#6c7080" stroke-width="1.5" stroke-linejoin="round"/></svg>
  <svg style="left:1042px;top:18px" width="16" height="16" viewBox="0 0 16 16" fill="none" stroke="#f0f0f0" stroke-width="1.6"><path d="M13.600000 8A5.600000 5.600000 0 1 1 11.200000 3.400000"/><circle cx="12.200000" cy="3.800000" r="1.400000" fill="#f0f0f0" stroke="none"/></svg>
  <svg style="left:1131px;top:18px" width="12" height="16" viewBox="0 0 12 16"><path d="M1.500000 1.500000h9v13l-4.500000-3.500000-4.500000 3.500000z" fill="none" stroke="#f0f0f0" stroke-width="1.6" stroke-linejoin="round"/></svg>
  <!-- url bar -->
  <div class="a" style="left:1160px;top:12px;width:464px;height:28px;background:#191b22;border-radius:5px"></div>
  <div class="a" style="left:1171px;top:19px;width:14px;height:14px;border-radius:50%;background:#c9cbd3"></div>
  <div class="a" style="left:1177px;top:22px;width:2px;height:5px;background:#191b22"></div>
  <div class="a" style="left:1177px;top:28.500000px;width:2px;height:2px;background:#191b22"></div>
  <div class="t" style="left:1194px;top:19px;font-size:14px;color:#a9acba"><span style="color:#fff;letter-spacing:-.55px">127.0.0.1</span><span style="letter-spacing:.12px">:3000/swagger#/default/PluginController...</span></div>
  <svg style="left:1527px;top:19px" width="16" height="15" viewBox="0 0 16 15" fill="none" stroke="#d0d2da" stroke-width="1.200000"><path d="M5 4.500000H1.500000v9h10v-3M5.500000 9.500000c.5-3 2.500000-4.500000 5.500000-4.500000V2.500000l3.500000 3.500000-3.500000 3.500000V7.500000c-2.500000 0-4 .5-5.500000 2z"/></svg>
  <div class="a" style="left:1553px;top:18px;width:1px;height:16px;background:#c9cbd3"></div>
  <svg style="left:1564px;top:17px" width="18" height="19" viewBox="0 0 18 19"><path d="M9 .8l3 .2 1.500000 1.500000 2 .3 1.300000 2.500000-.6 1.500000.3 3-1.700000 4.700000L9 18.300000 3.200000 14.500000 1.500000 9.800000l.3-3-.6-1.500000L2.500000 2.800000l2-.3L6 1z" fill="#f1562b"/><path d="M9 4.500000l2.500000.5 1.500000 2-1 3.500000L9 13l-3-2.500000-1-3.500000 1.500000-2z" fill="#fff"/><path d="M9 7l1.300000 1.500000L9 11 7.700000 8.500000z" fill="#f1562b"/></svg>
  <svg style="left:1598px;top:18px" width="19" height="17" viewBox="0 0 19 17"><path d="M9.500000 .8L18.300000 16H.7z" fill="#e8352e"/><path d="M9.500000 .8L18.300000 16H9.500000z" fill="#9e1f63" opacity=".75"/><path d="M.7 16h17.600000L14 11H5z" fill="#662d91" opacity=".8"/><path d="M9.500000 7.500000l3.300000 5.700000H6.200000z" fill="#fff"/></svg>
  <!-- right icons -->
  <svg style="left:1672px;top:18px" width="16" height="16" viewBox="0 0 16 16"><path d="M6 1.500000a1.600000 1.600000 0 0 1 3.200000 0V3h3.300000v3.500000h1a1.700000 1.700000 0 0 1 0 3.400000h-1V14H8.800000v-1.200000a1.500000 1.500000 0 0 0-3 0V14H1.500000V10h1.200000a1.600000 1.600000 0 0 0 0-3.200000H1.500000V3H6z" fill="#f0f0f0"/></svg>
  <svg style="left:1705px;top:19px" width="15" height="14" viewBox="0 0 15 14"><rect x=".8" y=".8" width="13.400000" height="12.400000" rx="1.500000" fill="none" stroke="#f0f0f0" stroke-width="1.500000"/><rect x="8" y=".8" width="6.200000" height="12.400000" fill="#f0f0f0"/></svg>
  <svg style="left:1743px;top:19px" width="18" height="15" viewBox="0 0 18 15" fill="none" stroke="#f0f0f0" stroke-width="1.500000"><path d="M15.500000 4.500000V2.500000a1.500000 1.500000 0 0 0-1.500000-1.500000H2.500000A1.500000 1.500000 0 0 0 1 2.500000v10A1.500000 1.500000 0 0 0 2.500000 14H14a1.500000 1.500000 0 0 0 1.500000-1.500000v-2M1 4.500000h15.500000v6h-5a3 3 0 0 1 0-6"/></svg>
  <div class="a" style="left:1784px;top:15px;width:46px;height:22px;border:1px solid #5c6070;border-radius:11px"></div>
  <div class="a" style="left:1791px;top:23px;width:6px;height:6px;border-radius:50%;background:#9b9eac"></div>
  <div class="t" style="left:1800px;top:20px;font-size:12.500000px;color:#f0f0f0;letter-spacing:-.2px">VPN</div>
  <div class="a" style="left:1844px;top:20px;width:11px;height:2px;background:#f0f0f0"></div>
  <div class="a" style="left:1844px;top:25px;width:11px;height:2px;background:#f0f0f0"></div>
  <div class="a" style="left:1844px;top:30px;width:11px;height:2px;background:#f0f0f0"></div>
</div></div>

<!-- magnifier 1: center (97,255) R=141 ; inner origin (-38,120) -->
<div class="mag" style="left:-44px;top:114px;width:282px;height:282px;"><div class="magc" style="background:#252526">
  <div class="a" style="left:0;top:132px;width:282px;height:33.5px;background:#04395e;border-top:1.5px solid #007fd4;border-bottom:1.5px solid #007fd4"></div>
  <div class="t mg" style="left:41px;top:7.5px;color:#ccc">scripts</div>
  <div class="t mg" style="left:40.3px;top:41.5px;color:#e2c08d;letter-spacing:-.7px">src</div>
  <div class="t mg" style="left:52px;top:73.5px;color:#e2c08d">health</div>
  <div class="t mg" style="left:52.3px;top:106.5px;color:#73c991;letter-spacing:-.3px">Plugins</div>
  <div class="t mg" style="left:64px;top:139.5px;color:#fff;letter-spacing:.15px">defaultDocument.pdf</div>
  <div class="t mg" style="left:65px;top:172.5px;color:#73c991">pdf-plugin.ts</div>
  <div class="t mg" style="left:65px;top:205.5px;color:#73c991">pdf-poppler.d.ts</div>
  <div class="t mg" style="left:65px;top:238.5px;color:#73c991">plugin.controller.ts</div>
  <svg style="left:27.0px;top:77.0px" width="15.0" height="15.0" viewBox="0 0 10 10"><path d="M3 0.8 L7.2 5 L3 9.2" fill="none" stroke="#c5c5c5" stroke-width="1.2"/></svg>
  <svg style="left:27.0px;top:110.0px" width="15.0" height="15.0" viewBox="0 0 10 10"><path d="M0.8 3 L5 7.2 L9.2 3" fill="none" stroke="#c5c5c5" stroke-width="1.2"/></svg>
  <svg style="left:35.0px;top:137.0px" width="24.0" height="24.0" viewBox="0 0 16 16"><path d="M6.7 2.3C6.3 4.8 6.5 7 6.9 8.8C5.6 10.4 3.6 12 1.9 12.4M6.9 8.8C9 8.5 11 8.9 12.6 9.8" fill="none" stroke="#d04a55" stroke-width="1.7" stroke-linecap="round" stroke-linejoin="round"/></svg>
  <div class="t" style="left:37px;top:175px;font-size:14.5px;font-weight:bold;color:#519aba;letter-spacing:-.4px">TS</div>
  <div class="t" style="left:37px;top:208px;font-size:14.5px;font-weight:bold;color:#519aba;letter-spacing:-.4px">TS</div>
  <div class="t" style="left:37px;top:241px;font-size:14.5px;font-weight:bold;color:#519aba;letter-spacing:-.4px">TS</div>
</div></div>
<!-- magnifier 2: center (362,945) R=142 ; inner origin (227,810) -->
<div class="mag" style="left:220px;top:803px;width:284px;height:284px;"><div class="magc" style="background:#1e1e1e"></div><div class="magc" style="left:-4px;top:-4px;right:-4px;bottom:-4px"><div class="a" style="left:4px;top:4px">
  <div class="t mt" style="left:23px;top:9px">Application is runn</div>
  <div class="t mt" style="left:23px;top:34.5px">PDF generated successfully</div>
  <div class="t mt" style="left:23px;top:60px">Successfully converted</div>
  <div class="t mt" style="left:23px;top:111px">Image URL:</div>
  <div class="t mt" style="left:23px;top:136.500000px">Default PDF generated su</div>
  <div class="a" style="left:2px;top:138px;width:12.5px;height:12.5px;border-radius:50%;background:#2d8fc7"></div>
  <div class="a" style="left:22px;top:157.5px;width:11.5px;height:25.5px;border:1.5px solid #ccc"></div>
</div></div></div>
<style>.mg{font-size:19.5px;-webkit-text-stroke:.3px currentColor}.mt{font-family:"Liberation Mono",monospace;font-size:19.2px;transform:scaleX(.9115);transform-origin:0 0;color:#d0d0d0;-webkit-text-stroke:.45px #d0d0d0;margin-top:-1px}</style>

</body></html>
